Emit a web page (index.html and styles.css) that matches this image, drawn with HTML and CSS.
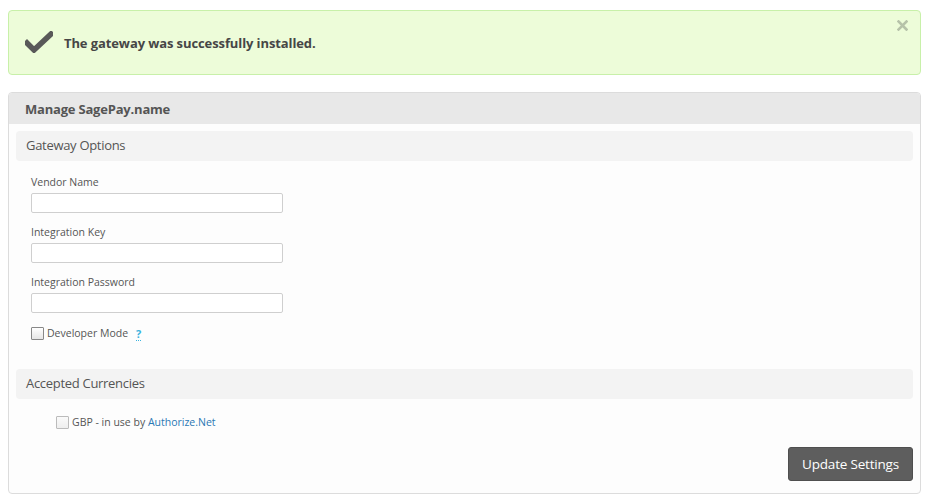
FILE: index.html
```html
<!DOCTYPE html>
<html>
<head>
<meta charset="utf-8">
<link rel="stylesheet" href="styles.css">
</head>
<body>
<div class="alert">
  <svg class="check" width="28" height="22" viewBox="0 0 28 22"><path d="M2 12 L9 19 L26 3" fill="none" stroke="#595959" stroke-width="5.5" stroke-linecap="square"/></svg>
  <span class="alert-text">The gateway was successfully installed.</span>
  <svg class="close" width="11" height="11" viewBox="0 0 11 11"><path d="M1.5 1.5 L9.5 9.5 M9.5 1.5 L1.5 9.5" stroke="#b6c2a9" stroke-width="2.6" stroke-linecap="square"/></svg>
</div>
<div class="panel">
  <div class="panel-head">Manage SagePay.name</div>
  <div class="panel-body">
    <div class="section">Gateway Options</div>
    <div class="fields">
      <label class="lbl">Vendor Name</label>
      <input class="inp" type="text">
      <label class="lbl">Integration Key</label>
      <input class="inp" type="text">
      <label class="lbl">Integration Password</label>
      <input class="inp" type="text">
      <div class="chk-row">
        <span class="box"></span>
        <span class="chk-text">Developer Mode</span>
        <span class="help">?</span>
      </div>
    </div>
    <div class="section">Accepted Currencies</div>
    <div class="currency">
      <span class="box light"></span>
      <span class="chk-text">GBP - in use by <a class="link">Authorize.Net</a></span>
    </div>
    <div class="actions">
      <button class="btn">Update Settings</button>
    </div>
  </div>
</div>
</body>
</html>
```
FILE: styles.css
```css
* { box-sizing: border-box; }
body {
  margin: 0;
  padding: 10px 9px 0 8px;
  font-family: "Open Sans", "DejaVu Sans", sans-serif;
  color: #555;
  background: #fff;
}
.alert {
  position: relative;
  height: 65px;
  background: #edfcd9;
  border: 1px solid #c8f0a9;
  border-radius: 4px;
  display: flex;
  align-items: center;
  padding-left: 16px;
}
.check { margin-right: 11px; margin-top: -1px; }
.alert-text {
  font-size: 13px;
  font-weight: 700;
  color: #464646;
  letter-spacing: -0.1px;
}
.close {
  position: absolute;
  right: 12px;
  top: 9px;
}
.panel {
  margin-top: 17px;
  border: 1px solid #dcdcdc;
  border-radius: 4px;
  background: #fdfdfd;
  overflow: hidden;
}
.panel-head {
  height: 31px;
  background: #e8e8e8;
  font-size: 13px;
  font-weight: 700;
  color: #555;
  padding: 7px 0 0 16px;
  letter-spacing: -0.2px;
}
.panel-body { padding: 7px 7px 12px 7px; }
.section {
  height: 30px;
  background: #f3f3f3;
  border-radius: 4px;
  font-size: 13px;
  color: #555;
  padding: 5px 0 0 10px;
  letter-spacing: -0.3px;
}
.fields {
  padding: 14px 0 0 15px;
  display: flex;
  flex-direction: column;
  align-items: flex-start;
  height: 208px;
}
.lbl {
  font-size: 10.5px;
  color: #555;
  line-height: 15px;
  height: 18px;
}
.inp {
  width: 252px;
  height: 20px;
  border: 1px solid #cfcfcf;
  border-radius: 2px;
  background: #fff;
  margin: 0 0 12px 0;
  padding: 0;
}
.chk-row {
  display: flex;
  align-items: center;
  margin-top: 1px;
}
.box {
  width: 13px;
  height: 13px;
  border: 1px solid #888;
  background: linear-gradient(#fff, #e6e6e6);
  border-radius: 1px;
  margin-right: 3px;
}
.box.light { border-color: #bbb; background: linear-gradient(#fafafa, #eee); }
.chk-text { font-size: 10.5px; color: #555; line-height: 15px; }
.help {
  margin-left: 8px;
  font-size: 11px;
  font-weight: 700;
  color: #3cb3dd;
  border-bottom: 1px dotted #3cb3dd;
  line-height: 12px;
  margin-top: 2px;
}
.currency {
  display: flex;
  align-items: center;
  padding: 16px 0 0 40px;
}
.link { color: #2a78b4; text-decoration: none; }
.actions {
  display: flex;
  justify-content: flex-end;
  padding-top: 17px;
}
.btn {
  width: 125px;
  height: 34px;
  background: #5e5e5e;
  color: #fff;
  border: 1px solid #4f4f4f;
  border-radius: 3px;
  font-family: "Open Sans", "DejaVu Sans", sans-serif;
  font-size: 13.5px;
  letter-spacing: -0.2px;
  padding: 0;
}
```
